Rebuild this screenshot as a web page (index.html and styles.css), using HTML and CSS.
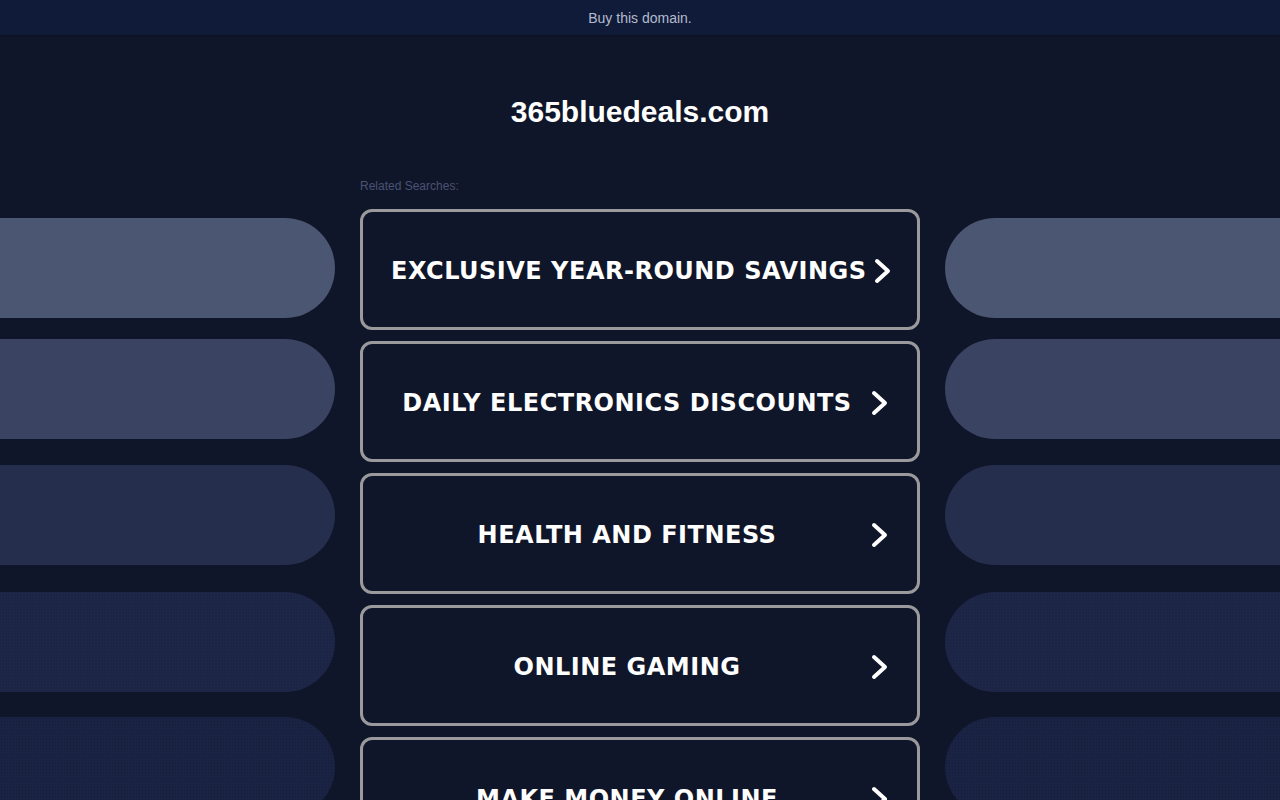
FILE: index.html
```html
<!DOCTYPE html>
<html lang="en">
<head>
<meta charset="utf-8">
<title>365bluedeals.com</title>
<link rel="stylesheet" href="styles.css">
</head>
<body>
<div class="topbar">Buy this domain.</div>
<h1 class="title">365bluedeals.com</h1>
<div class="main">
  <div class="side side-left">
    <div class="pill p1"></div>
    <div class="pill p2"></div>
    <div class="pill p3"></div>
    <div class="pill p4"></div>
    <div class="pill p5"></div>
  </div>
  <div class="center">
    <div class="label">Related Searches:</div>
    <a class="btn" href="#"><span class="btn-text">EXCLUSIVE YEAR-ROUND SAVINGS</span><svg class="chev" viewBox="0 0 18 26" width="18" height="26"><path d="M3 3 L14 13 L3 23" fill="none" stroke="#fff" stroke-width="4" stroke-linecap="round" stroke-linejoin="round"/></svg></a>
    <a class="btn" href="#"><span class="btn-text">DAILY ELECTRONICS DISCOUNTS</span><svg class="chev" viewBox="0 0 18 26" width="18" height="26"><path d="M3 3 L14 13 L3 23" fill="none" stroke="#fff" stroke-width="4" stroke-linecap="round" stroke-linejoin="round"/></svg></a>
    <a class="btn" href="#"><span class="btn-text">HEALTH AND FITNESS</span><svg class="chev" viewBox="0 0 18 26" width="18" height="26"><path d="M3 3 L14 13 L3 23" fill="none" stroke="#fff" stroke-width="4" stroke-linecap="round" stroke-linejoin="round"/></svg></a>
    <a class="btn" href="#"><span class="btn-text">ONLINE GAMING</span><svg class="chev" viewBox="0 0 18 26" width="18" height="26"><path d="M3 3 L14 13 L3 23" fill="none" stroke="#fff" stroke-width="4" stroke-linecap="round" stroke-linejoin="round"/></svg></a>
    <a class="btn" href="#"><span class="btn-text">MAKE MONEY ONLINE</span><svg class="chev" viewBox="0 0 18 26" width="18" height="26"><path d="M3 3 L14 13 L3 23" fill="none" stroke="#fff" stroke-width="4" stroke-linecap="round" stroke-linejoin="round"/></svg></a>
  </div>
  <div class="side side-right">
    <div class="pill p1"></div>
    <div class="pill p2"></div>
    <div class="pill p3"></div>
    <div class="pill p4"></div>
    <div class="pill p5"></div>
  </div>
</div>
</body>
</html>
```
FILE: styles.css
```css
html, body {
  margin: 0;
  padding: 0;
}
body {
  background: #101629;
  font-family: "Liberation Sans", Arial, sans-serif;
  height: 800px;
  overflow: hidden;
}
.topbar {
  height: 35px;
  line-height: 36px;
  background: #101b39;
  color: #b3bbce;
  font-size: 14px;
  text-align: center;
  box-shadow: 0 1px 2px rgba(0,0,0,0.25);
}
.title {
  margin: 60px 0 0;
  height: 32px;
  line-height: 34px;
  font-size: 30px;
  font-weight: bold;
  color: #ffffff;
  text-align: center;
}
.main {
  margin-top: 52px;
  display: grid;
  grid-template-columns: 1fr 560px 1fr;
  column-gap: 25px;
}
.side {
  padding-top: 39px;
  display: flex;
  flex-direction: column;
}
.pill {
  height: 100px;
  flex: none;
}
.side-left .pill {
  border-radius: 0 50px 50px 0;
}
.side-right .pill {
  border-radius: 50px 0 0 50px;
}
.p1 { background: #4b5673; }
.p2 { background: #3a4361; margin-top: 21px; }
.p3 { background: #252e4d; margin-top: 26px; }
.p4 {
  background-color: #1c2546;
  background-image: radial-gradient(circle, rgba(60,75,120,0.18) 0.6px, transparent 1px);
  background-size: 3px 3px;
  margin-top: 27px;
}
.p5 {
  background-color: #1a2343;
  background-image: radial-gradient(circle, rgba(10,15,35,0.35) 0.6px, transparent 1px);
  background-size: 3px 3px;
  margin-top: 25px;
}
.center {
  display: flex;
  flex-direction: column;
}
.label {
  height: 14px;
  line-height: 14px;
  font-size: 12px;
  color: #4a5373;
  margin-bottom: 16px;
}
.btn {
  box-sizing: border-box;
  height: 121px;
  flex: none;
  margin-bottom: 11px;
  border: 3px solid #9a9a9c;
  border-radius: 12px;
  display: flex;
  align-items: center;
  padding: 3px 28px 0;
  text-decoration: none;
  color: #ffffff;
}
.btn-text {
  flex: 1;
  text-align: center;
  font-family: "DejaVu Sans", Verdana, sans-serif;
  font-weight: bold;
  font-size: 24px;
  letter-spacing: 0.5px;
  white-space: nowrap;
}
.chev {
  flex: none;
  margin-left: 8px;
  display: block;
}
```
